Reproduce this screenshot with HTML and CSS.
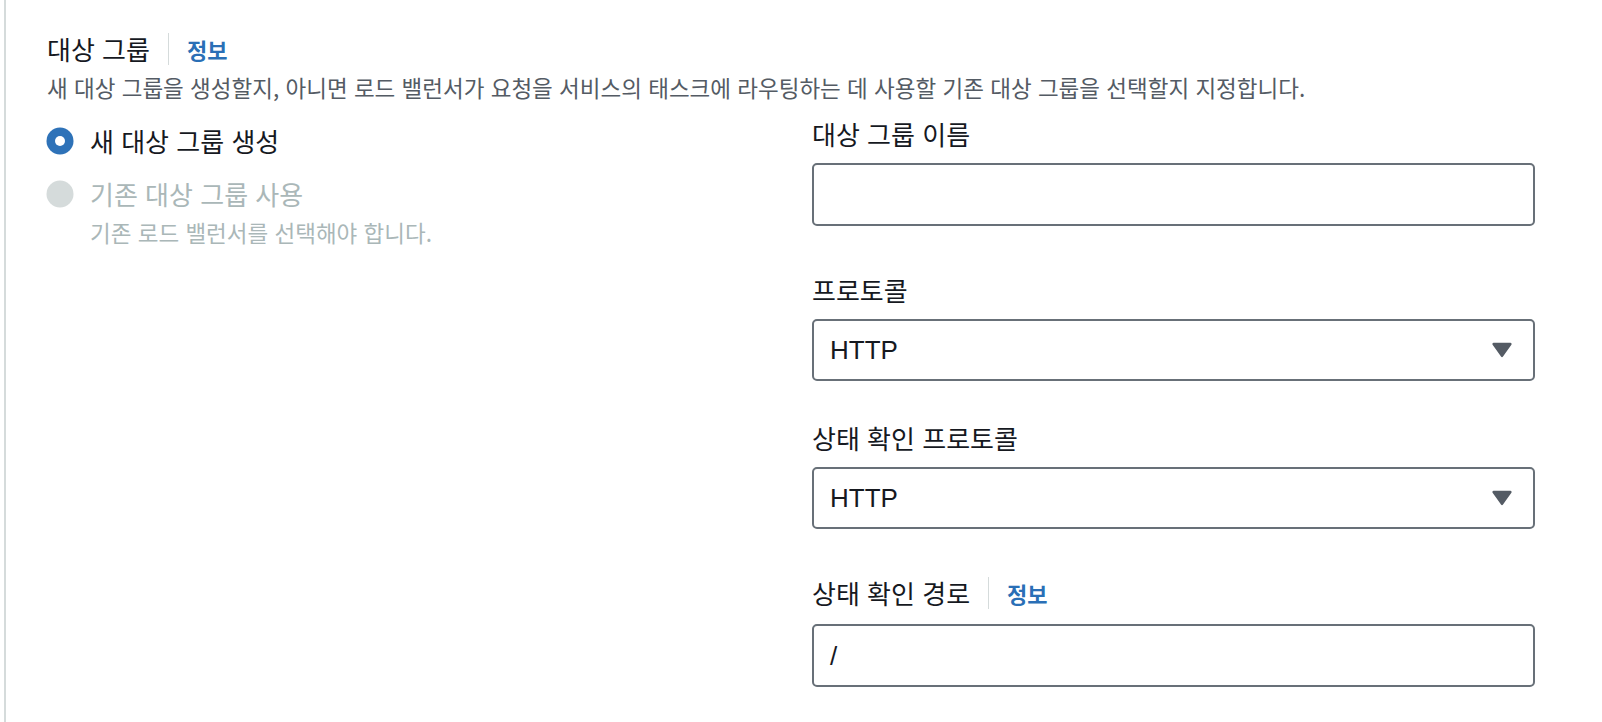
FILE: index.html
```html
<!DOCTYPE html>
<html lang="ko">
<head>
<meta charset="utf-8">
<title>대상 그룹</title>
<link rel="stylesheet" href="styles.css">
</head>
<body>
<div class="panel">
  <div class="header">
    <h2 class="title">대상 그룹</h2>
    <span class="divider"></span>
    <a class="info" href="#">정보</a>
  </div>
  <p class="desc">새 대상 그룹을 생성할지, 아니면 로드 밸런서가 요청을 서비스의 태스크에 라우팅하는 데 사용할 기존 대상 그룹을 선택할지 지정합니다.</p>
  <div class="grid">
    <div class="options">
      <div class="radio-row">
        <svg class="radio" viewBox="0 0 28 28" width="28" height="28" aria-hidden="true">
          <circle cx="14" cy="14" r="13.5" fill="#2e72b8"/>
          <circle cx="14" cy="14" r="5" fill="#ffffff"/>
        </svg>
        <span class="radio-label">새 대상 그룹 생성</span>
      </div>
      <div class="radio-row radio-row--disabled">
        <svg class="radio" viewBox="0 0 28 28" width="28" height="28" aria-hidden="true">
          <circle cx="14" cy="14" r="13.5" fill="#d5dbdb"/>
        </svg>
        <span class="radio-label">기존 대상 그룹 사용</span>
      </div>
      <div class="radio-desc">기존 로드 밸런서를 선택해야 합니다.</div>
    </div>
    <div class="fields">
      <div class="field field--gap-lg">
        <div class="label">대상 그룹 이름</div>
        <div class="control control--input"></div>
      </div>
      <div class="field field--gap-sm">
        <div class="label">프로토콜</div>
        <div class="control control--select">
          <span class="value">HTTP</span>
          <svg class="caret" viewBox="0 0 20 16" width="20" height="16" aria-hidden="true">
            <path d="M1.6 0.8 H18.4 a1.2 1.2 0 0 1 1 1.9 L11 14.6 a1.2 1.2 0 0 1 -2 0 L0.6 2.7 A1.2 1.2 0 0 1 1.6 0.8 Z" fill="#545b64"/>
          </svg>
        </div>
      </div>
      <div class="field field--gap-lg">
        <div class="label">상태 확인 프로토콜</div>
        <div class="control control--select">
          <span class="value">HTTP</span>
          <svg class="caret" viewBox="0 0 20 16" width="20" height="16" aria-hidden="true">
            <path d="M1.6 0.8 H18.4 a1.2 1.2 0 0 1 1 1.9 L11 14.6 a1.2 1.2 0 0 1 -2 0 L0.6 2.7 A1.2 1.2 0 0 1 1.6 0.8 Z" fill="#545b64"/>
          </svg>
        </div>
      </div>
      <div class="field">
        <div class="label label--info">
          <span>상태 확인 경로</span>
          <span class="divider"></span>
          <a class="info" href="#">정보</a>
        </div>
        <div class="control control--input"><span class="value">/</span></div>
      </div>
    </div>
  </div>
</div>
</body>
</html>
```

FILE: styles.css
```css
* {
  box-sizing: border-box;
}

html, body {
  margin: 0;
  padding: 0;
  background: #ffffff;
}

body {
  font-family: "Noto Sans CJK KR", "Noto Sans", sans-serif;
  color: #16191f;
  width: 1602px;
  height: 722px;
  overflow: hidden;
}

.panel {
  margin-left: 4px;
  border-left: 2px solid #d5dbdb;
  padding: 33px 67px 0 41px;
  height: 722px;
}

.header {
  display: flex;
  align-items: center;
  height: 32px;
}

.title {
  margin: 0;
  font-size: 26px;
  line-height: 32px;
  font-weight: 400;
  color: #16191f;
}

.divider {
  display: inline-block;
  width: 1px;
  height: 32px;
  background: #d5dbdb;
  margin: 0 18px;
}

.info {
  font-size: 22px;
  line-height: 30px;
  font-weight: 700;
  color: #2a6fb6;
  text-decoration: none;
}

.desc {
  margin: 7px 0 0;
  font-size: 22.5px;
  line-height: 31px;
  color: #545b64;
  white-space: nowrap;
}

.grid {
  display: grid;
  grid-template-columns: 1fr 1fr;
  column-gap: 42px;
  margin-top: 16px;
}

.options {
  padding-top: 7px;
  display: flex;
  flex-direction: column;
}

.radio-row {
  display: flex;
  align-items: center;
  height: 30px;
}

.radio-row + .radio-row {
  margin-top: 23px;
}

.radio {
  flex: 0 0 28px;
  margin-left: -1px;
  margin-right: 16px;
}

.radio-label {
  font-size: 26px;
  line-height: 30px;
  color: #16191f;
}

.radio-row--disabled .radio-label {
  color: #aab7b8;
}

.radio-desc {
  margin-top: 8px;
  padding-left: 43px;
  font-size: 22.5px;
  line-height: 30px;
  color: #aab7b8;
}

.fields {
  display: flex;
  flex-direction: column;
}

.field--gap-lg {
  margin-bottom: 49px;
}

.field--gap-sm {
  margin-bottom: 42px;
}

.label {
  font-size: 26px;
  line-height: 30px;
  height: 30px;
  margin-bottom: 14px;
  color: #16191f;
}

.label--info {
  display: flex;
  align-items: center;
  margin-bottom: 16px;
}

.control {
  display: flex;
  align-items: center;
  height: 63px;
  border: 2px solid #687078;
  border-radius: 5px;
  padding: 0 21px 0 16px;
  background: #ffffff;
}

.control--select {
  height: 62px;
  justify-content: space-between;
}

.value {
  font-family: "Liberation Sans", "Noto Sans CJK KR", sans-serif;
  font-size: 26px;
  line-height: 30px;
  color: #16191f;
}

.caret {
  display: block;
  flex: 0 0 20px;
}
```
